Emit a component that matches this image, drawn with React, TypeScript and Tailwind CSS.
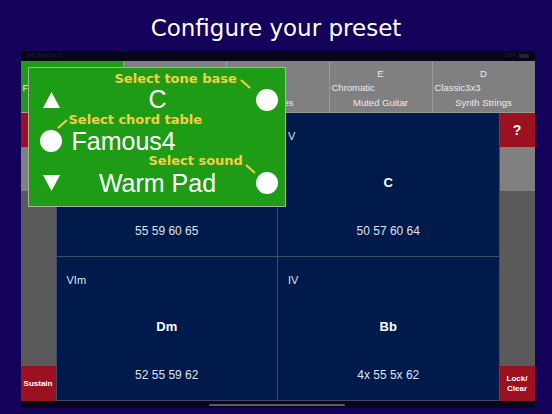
import React from "react";

type HeaderCell = { note: string; table: string; sound: string; active?: boolean };

const headerCells: HeaderCell[] = [
  { note: "C", table: "Famous4", sound: "Warm Pad", active: true },
  { note: "G", table: "Pop Chords", sound: "Piano" },
  { note: "A", table: "Blues Chords", sound: "Chimes" },
  { note: "E", table: "Chromatic", sound: "Muted Guitar" },
  { note: "D", table: "Classic3x3", sound: "Synth Strings" },
];

type Pad = { degree: string; chord: string; notes: string };

const pads: Pad[] = [
  { degree: "I", chord: "F", notes: "55 59 60 65" },
  { degree: "V", chord: "C", notes: "50 57 60 64" },
  { degree: "VIm", chord: "Dm", notes: "52 55 59 62" },
  { degree: "IV", chord: "Bb", notes: "4x 55 5x 62" },
];

function Circle() {
  return <div className="w-[22px] h-[22px] rounded-full bg-white shrink-0" />;
}

function Triangle({ up }: { up?: boolean }) {
  return (
    <svg width="17" height="16" viewBox="0 0 17 16" className="shrink-0">
      <polygon points={up ? "8.5,0 17,16 0,16" : "0,0 17,0 8.5,16"} fill="white" />
    </svg>
  );
}

function Connector({ flip }: { flip?: boolean }) {
  return (
    <svg width="9" height="8" viewBox="0 0 9 8" className="shrink-0 overflow-visible">
      <line x1={0} y1={flip ? 8 : 0} x2={9} y2={flip ? 0 : 8} stroke="#f5cf47" strokeWidth="2" />
    </svg>
  );
}

function PresetPopup() {
  const label =
    "font-['DejaVu_Sans',sans-serif] font-bold text-[13px] leading-none text-[#f5cf47] whitespace-nowrap";
  const big = "font-['Liberation_Sans',Arial,sans-serif] text-[25px] leading-none text-white whitespace-nowrap";
  return (
    <div className="absolute left-[7px] top-[16px] w-[258px] h-[140px] bg-[#1f9c15] border border-[#a9b0a6] flex flex-col">
      <div className="h-[20px] flex items-center pl-[86px]">
        <span className={label}>Select tone base</span>
        <div className="ml-[4px] mt-[12px]">
          <Connector />
        </div>
      </div>
      <div className="h-[23px] flex items-center pl-[14px]">
        <Triangle up />
        <div className={`w-[196px] text-center ${big}`}>C</div>
        <Circle />
      </div>
      <div className="h-[17px] flex items-center pl-[29px]">
        <div className="mt-[8px] mr-[2px]">
          <Connector flip />
        </div>
        <span className={label}>Select chord table</span>
      </div>
      <div className="h-[26px] flex items-center pl-[11px]">
        <Circle />
        <span className={`ml-[10px] ${big}`}>Famous4</span>
      </div>
      <div className="h-[13px] flex items-center pl-[120px]">
        <span className={label}>Select sound</span>
        <div className="ml-[3px] mt-[16px]">
          <Connector />
        </div>
      </div>
      <div className="h-[32px] flex items-center pl-[14px]">
        <Triangle />
        <div className={`w-[196px] text-center ${big}`}>Warm Pad</div>
        <Circle />
      </div>
    </div>
  );
}

function SideBar({ top, bottom }: { top: React.ReactNode; bottom: React.ReactNode }) {
  return (
    <div className="w-[35px] flex flex-col font-['Liberation_Sans',Arial,sans-serif] font-bold text-white">
      <div className="h-[34px] bg-[#9c111f] flex items-center justify-center">{top}</div>
      <div className="h-[44px] bg-[#808080]" />
      <div className="flex-1 bg-[#5a5a5a]" />
      <div className="h-[35px] bg-[#9c111f] flex items-center justify-center text-center">{bottom}</div>
    </div>
  );
}

export default function App() {
  return (
    <div className="w-[552px] h-[414px] bg-[#14015a] flex flex-col items-center overflow-hidden">
      <div className="h-[51px] w-full flex items-center justify-center pt-[6px]">
        <h1 className="font-['DejaVu_Sans',Verdana,sans-serif] text-[23px] leading-none text-white">
          Configure your preset
        </h1>
      </div>

      <div className="relative w-[514px] ml-[3px] h-[357px] flex flex-col">
        <div className="h-[10px] bg-[#06061b] flex items-center justify-between px-[6px] text-[5px] text-[#22223a] font-['Liberation_Sans',Arial,sans-serif]">
          <span>9:41 Mon Jun 3</span>
          <span className="flex items-center gap-[2px]">
            <span>100%</span>
            <span className="w-[10px] h-[4px] bg-[#22223a] rounded-[1px]" />
          </span>
        </div>

        <div className="h-[52px] flex bg-[#808080] border-b border-[#9a9a9a] font-['Liberation_Sans',Arial,sans-serif] text-[9.5px] leading-none text-[#ececec]">
          {headerCells.map((c, i) => (
            <div
              key={i}
              className={`flex-1 flex flex-col pt-[8px] ${i > 0 ? "border-l border-[#9a9a9a]" : ""} ${
                c.active ? "bg-[#1f9c15]" : ""
              }`}
            >
              <div className="h-[14px] text-center">{c.note}</div>
              <div className="h-[15px] pl-[2px] whitespace-nowrap">{c.table}</div>
              <div className="text-center whitespace-nowrap">{c.sound}</div>
            </div>
          ))}
        </div>

        <div className="flex-1 flex">
          <SideBar top={null} bottom={<span className="text-[8px] leading-none">Sustain</span>} />
          <div className="flex-1 grid grid-cols-2 grid-rows-2 gap-px bg-[#3d4a6c] border-l border-r border-b border-[#3d4a6c]">
            {pads.map((p, i) => (
              <div
                key={i}
                className="bg-[#001a4b] flex flex-col pt-[16px] font-['Liberation_Sans',Arial,sans-serif] text-[#dfe3ee]"
              >
                <div className="h-[14px] pl-[10px] text-[11px] leading-[14px]">{p.degree}</div>
                <div className="mt-[33px] h-[14px] text-center text-[13px] font-bold leading-[14px] text-white">
                  {p.chord}
                </div>
                <div className="mt-[34px] h-[14px] text-center text-[12px] leading-[14px]">{p.notes}</div>
              </div>
            ))}
          </div>
          <SideBar
            top={<span className="text-[14px] leading-none">?</span>}
            bottom={
              <span className="text-[8px] leading-[10px]">
                Lock/
                <br />
                Clear
              </span>
            }
          />
        </div>

        <div className="h-[7px] bg-[#07071c] flex items-center justify-center">
          <div className="w-[136px] h-[2px] rounded-full bg-[#5b5b5b] -ml-[2px]" />
        </div>

        <PresetPopup />
      </div>
    </div>
  );
}
